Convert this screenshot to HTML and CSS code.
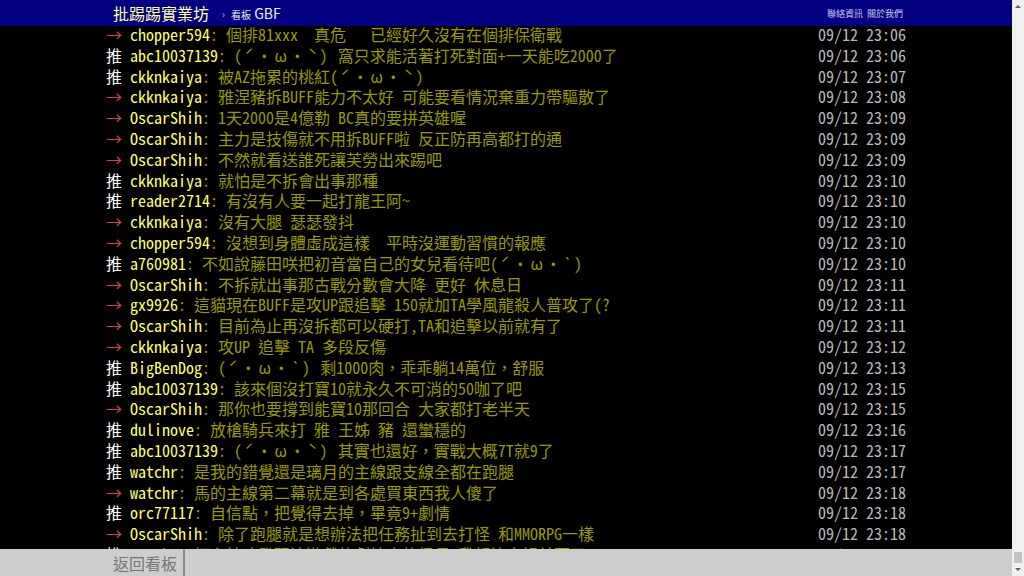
FILE: index.html
```html
<!DOCTYPE html>
<html lang="zh-Hant-TW">
<head>
  <meta charset="UTF-8">
  <title>[閒聊] GBF - 看板 GBF - 批踢踢實業坊</title>
  <link rel="stylesheet" href="styles.css">
</head>
<body>
<div id="topbar-container">
  <div id="topbar">
    <a id="logo" href="#">批踢踢實業坊</a>
    <span class="sep">›</span>
    <a class="board" href="#"><span class="board-label">看板</span> GBF</a>
    <div class="right">
      <a href="#">聯絡資訊</a>
      <a href="#">關於我們</a>
    </div>
  </div>
</div>

<div id="main-container">
  <div class="bbs-screen">
    <div class="push"><span class="push-tag arrow">→ </span><span class="push-userid">chopper594</span><span class="push-content">: 個排81xxx　真危　 已經好久沒有在個排保衛戰</span><span class="push-ipdatetime"> 09/12 23:06</span></div>
    <div class="push"><span class="push-tag">推 </span><span class="push-userid">abc10037139</span><span class="push-content">: <span class="kao">(ˊ‧ω‧ˋ)</span> 窩只求能活著打死對面+一天能吃2000了</span><span class="push-ipdatetime"> 09/12 23:06</span></div>
    <div class="push"><span class="push-tag">推 </span><span class="push-userid">ckknkaiya</span><span class="push-content">: 被AZ拖累的桃紅<span class="kao">(ˊ‧ω‧ˋ)</span></span><span class="push-ipdatetime"> 09/12 23:07</span></div>
    <div class="push"><span class="push-tag arrow">→ </span><span class="push-userid">ckknkaiya</span><span class="push-content">: 雅涅豬拆BUFF能力不太好 可能要看情況棄重力帶驅散了</span><span class="push-ipdatetime"> 09/12 23:08</span></div>
    <div class="push"><span class="push-tag arrow">→ </span><span class="push-userid">OscarShih</span><span class="push-content">: 1天2000是4億勒 BC真的要拼英雄喔</span><span class="push-ipdatetime"> 09/12 23:09</span></div>
    <div class="push"><span class="push-tag arrow">→ </span><span class="push-userid">OscarShih</span><span class="push-content">: 主力是技傷就不用拆BUFF啦 反正防再高都打的通</span><span class="push-ipdatetime"> 09/12 23:09</span></div>
    <div class="push"><span class="push-tag arrow">→ </span><span class="push-userid">OscarShih</span><span class="push-content">: 不然就看送誰死讓芙勞出來踢吧</span><span class="push-ipdatetime"> 09/12 23:09</span></div>
    <div class="push"><span class="push-tag">推 </span><span class="push-userid">ckknkaiya</span><span class="push-content">: 就怕是不拆會出事那種</span><span class="push-ipdatetime"> 09/12 23:10</span></div>
    <div class="push"><span class="push-tag">推 </span><span class="push-userid">reader2714</span><span class="push-content">: 有沒有人要一起打龍王阿~</span><span class="push-ipdatetime"> 09/12 23:10</span></div>
    <div class="push"><span class="push-tag arrow">→ </span><span class="push-userid">ckknkaiya</span><span class="push-content">: 沒有大腿 瑟瑟發抖</span><span class="push-ipdatetime"> 09/12 23:10</span></div>
    <div class="push"><span class="push-tag arrow">→ </span><span class="push-userid">chopper594</span><span class="push-content">: 沒想到身體虛成這樣　平時沒運動習慣的報應</span><span class="push-ipdatetime"> 09/12 23:10</span></div>
    <div class="push"><span class="push-tag">推 </span><span class="push-userid">a760981</span><span class="push-content">: 不如說藤田咲把初音當自己的女兒看待吧<span class="kao">(ˊ‧ω‧`)</span></span><span class="push-ipdatetime"> 09/12 23:10</span></div>
    <div class="push"><span class="push-tag arrow">→ </span><span class="push-userid">OscarShih</span><span class="push-content">: 不拆就出事那古戰分數會大降 更好 休息日</span><span class="push-ipdatetime"> 09/12 23:11</span></div>
    <div class="push"><span class="push-tag arrow">→ </span><span class="push-userid">gx9926</span><span class="push-content">: 這貓現在BUFF是攻UP跟追擊 150就加TA學風龍殺人普攻了(?</span><span class="push-ipdatetime"> 09/12 23:11</span></div>
    <div class="push"><span class="push-tag arrow">→ </span><span class="push-userid">OscarShih</span><span class="push-content">: 目前為止再沒拆都可以硬打,TA和追擊以前就有了</span><span class="push-ipdatetime"> 09/12 23:11</span></div>
    <div class="push"><span class="push-tag arrow">→ </span><span class="push-userid">ckknkaiya</span><span class="push-content">: 攻UP 追擊 TA 多段反傷</span><span class="push-ipdatetime"> 09/12 23:12</span></div>
    <div class="push"><span class="push-tag">推 </span><span class="push-userid">BigBenDog</span><span class="push-content">: <span class="kao">(ˊ‧ω‧`)</span> 剩1000肉，乖乖躺14萬位，舒服</span><span class="push-ipdatetime"> 09/12 23:13</span></div>
    <div class="push"><span class="push-tag">推 </span><span class="push-userid">abc10037139</span><span class="push-content">: 該來個沒打寶10就永久不可消的50咖了吧</span><span class="push-ipdatetime"> 09/12 23:15</span></div>
    <div class="push"><span class="push-tag arrow">→ </span><span class="push-userid">OscarShih</span><span class="push-content">: 那你也要撐到能寶10那回合 大家都打老半天</span><span class="push-ipdatetime"> 09/12 23:15</span></div>
    <div class="push"><span class="push-tag">推 </span><span class="push-userid">dulinove</span><span class="push-content">: 放槍騎兵來打 雅 王姊 豬 還蠻穩的</span><span class="push-ipdatetime"> 09/12 23:16</span></div>
    <div class="push"><span class="push-tag">推 </span><span class="push-userid">abc10037139</span><span class="push-content">: <span class="kao">(ˊ‧ω‧ˋ)</span> 其實也還好，實戰大概7T就9了</span><span class="push-ipdatetime"> 09/12 23:17</span></div>
    <div class="push"><span class="push-tag">推 </span><span class="push-userid">watchr</span><span class="push-content">: 是我的錯覺還是璃月的主線跟支線全都在跑腿</span><span class="push-ipdatetime"> 09/12 23:17</span></div>
    <div class="push"><span class="push-tag arrow">→ </span><span class="push-userid">watchr</span><span class="push-content">: 馬的主線第二幕就是到各處買東西我人傻了</span><span class="push-ipdatetime"> 09/12 23:18</span></div>
    <div class="push"><span class="push-tag">推 </span><span class="push-userid">orc77117</span><span class="push-content">: 自信點，把覺得去掉，畢竟9+劇情</span><span class="push-ipdatetime"> 09/12 23:18</span></div>
    <div class="push"><span class="push-tag arrow">→ </span><span class="push-userid">OscarShih</span><span class="push-content">: 除了跑腿就是想辦法把任務扯到去打怪 和MMORPG一樣</span><span class="push-ipdatetime"> 09/12 23:18</span></div>
    <div class="push"><span class="push-tag">推 </span><span class="push-userid">watchr</span><span class="push-content">: 打主線才發現這遊戲的劇情真的很長 我都快忘記前面了</span><span class="push-ipdatetime"> 09/12 23:19</span></div>
  </div>
</div>

<div id="navigation-container">
  <div id="navigation">
    <a class="board" href="#">返回看板</a>
    <div class="bar"></div>
  </div>
</div>

<div class="scrollbar">
  <div class="scroll-up"></div>
  <div class="scroll-thumb"></div>
  <div class="scroll-down"></div>
</div>
</body>
</html>
```

FILE: styles.css
```css
html, body {
  margin: 0;
  height: 100%;
  overflow: hidden;
}
body {
  background: #000;
  color: #ccc;
  font-family: "Noto Sans Mono CJK TC", "Liberation Mono", "Noto Sans CJK TC", monospace;
}
a {
  text-decoration: none;
  color: inherit;
}

/* top bar */
#topbar-container {
  background: #000080;
  height: 26px;
  margin-right: 12px;
}
#topbar {
  width: 790px;
  margin: 0 auto;
  padding: 0 3px 0 7px;
  height: 26px;
  display: flex;
  align-items: center;
  font-family: "Noto Sans CJK TC", sans-serif;
}
#logo {
  color: #ffffa8;
  font-size: 16px;
}
.sep {
  color: #bbb;
  font-size: 10px;
  margin: 0 6px 0 13px;
}
#topbar .board {
  color: #eee;
  font-size: 14px;
}
.board-label {
  font-size: 10px;
}
#topbar .right {
  margin-left: auto;
  display: flex;
  gap: 4px;
  font-size: 9px;
  color: #c8c8f0;
}

/* pushes */
#main-container {
  margin-right: 12px;
}
.bbs-screen {
  width: 800px;
  margin: -2px auto 0;
}
.push {
  display: flex;
  font-size: 16px;
  line-height: 20.8px;
  white-space: pre;
}
.push-tag {
  color: #fff;
}
.push-tag.arrow {
  color: #d84444;
}
.push-userid {
  color: #ffff66;
}
.push-content {
  color: #999900;
}
.kao {
  letter-spacing: 2.3px;
}
.push-ipdatetime {
  margin-left: auto;
  color: #bbb;
}

/* bottom bar */
#navigation-container {
  position: fixed;
  left: 0;
  right: 12px;
  bottom: 0;
  height: 27px;
  background: #cdcdcd;
}
#navigation {
  width: 793px;
  margin: 0 auto;
  padding-left: 7px;
  height: 27px;
  display: flex;
  align-items: center;
  font-family: "Noto Sans CJK TC", sans-serif;
}
#navigation .board {
  color: #777;
  font-size: 16px;
}
#navigation .bar {
  width: 2px;
  height: 27px;
  background: #8a8a8a;
  margin-left: 6px;
}

/* fake scrollbar, scrolled to the end */
.scrollbar {
  position: fixed;
  top: 0;
  right: 0;
  bottom: 0;
  width: 12px;
  background: #f0f0f0;
  display: flex;
  flex-direction: column;
  align-items: center;
}
.scroll-up, .scroll-down {
  width: 0;
  height: 0;
  border-left: 3px solid transparent;
  border-right: 3px solid transparent;
}
.scroll-up {
  margin-top: 5px;
  border-bottom: 3px solid #606060;
}
.scroll-thumb {
  margin-top: auto;
  width: 8px;
  height: 11px;
  background: #c4c4c4;
}
.scroll-down {
  margin: 5px 0 5px;
  border-top: 3px solid #606060;
}
```
